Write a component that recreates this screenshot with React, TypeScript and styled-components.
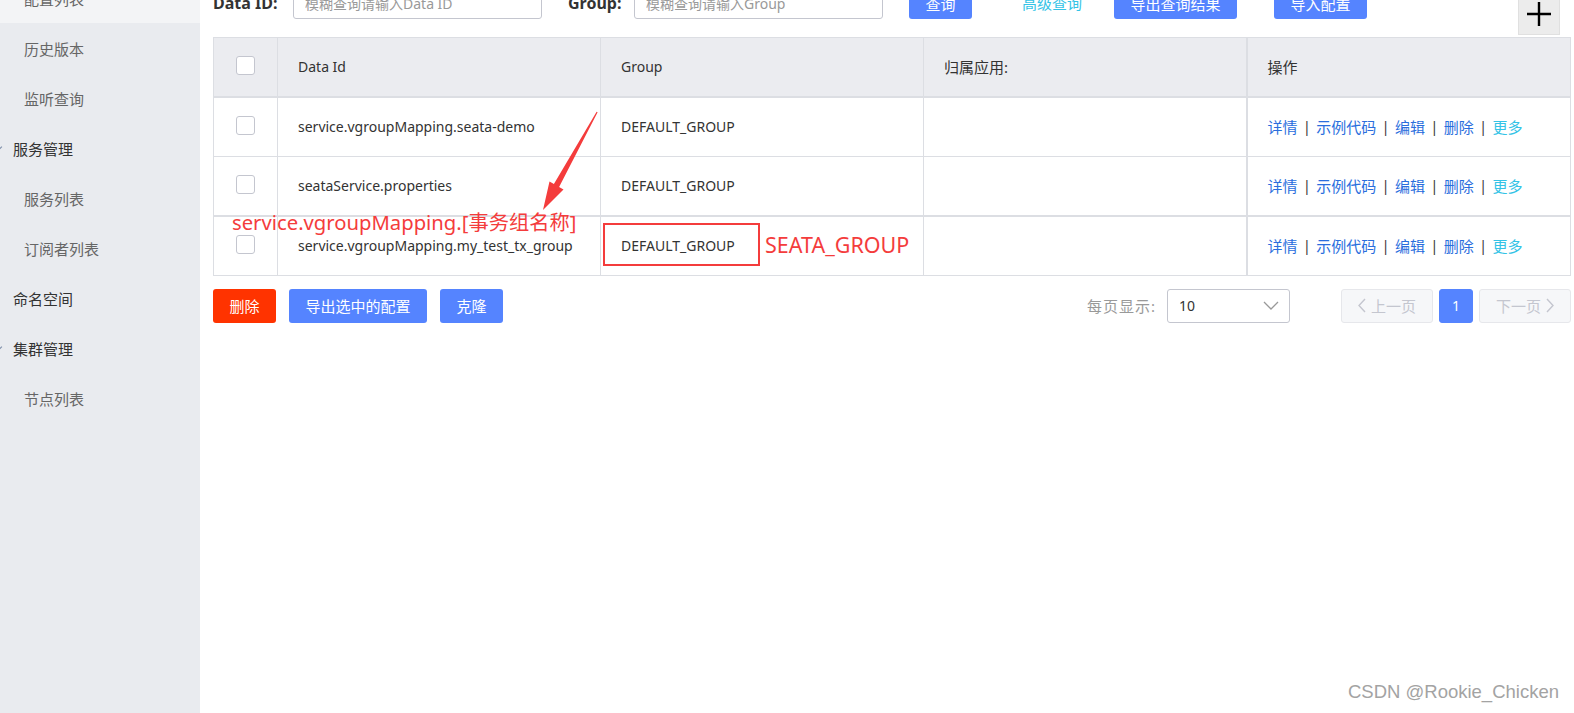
import React from "react";
import styled, { createGlobalStyle } from "styled-components";

const GlobalStyle = createGlobalStyle`
  html, body {
    margin: 0;
    padding: 0;
    background: #fff;
  }
  body {
    font-family: "Noto Sans", "Noto Sans CJK SC", sans-serif;
    font-size: 14px;
    color: #333;
    overflow: hidden;
  }
  * {
    box-sizing: border-box;
  }
`;

const colors = {
  border: "#dcdee3",
  headerBg: "#ebecf0",
  sidebarBg: "#e9ebef",
  sidebarActive: "#f3f4f6",
  primary: "#5584ff",
  danger: "#ff3300",
  link: "#2a6edd",
  linkCyan: "#34c3e6",
  muted: "#999",
  disabled: "#c4c6cf",
  mark: "#f43c3c",
};

const Page = styled.div`
  position: relative;
  display: flex;
  width: 100vw;
  min-width: 1574px;
  height: 713px;
  overflow: hidden;
`;

/* ---------- sidebar ---------- */

const Sidebar = styled.aside`
  flex: 0 0 200px;
  background: ${colors.sidebarBg};
  overflow: hidden;
`;

const NavList = styled.ul`
  list-style: none;
  margin: -27px 0 0;
  padding: 0;
`;

const NavItem = styled.li<{ $sub?: boolean; $active?: boolean; $caret?: boolean }>`
  position: relative;
  height: 50px;
  display: flex;
  align-items: center;
  padding-left: ${(p) => (p.$sub ? 24 : 13)}px;
  color: ${(p) => (p.$sub ? "#666" : "#333")};
  background: ${(p) => (p.$active ? colors.sidebarActive : "transparent")};
  font-size: 15px;

  &::before {
    content: "";
    display: ${(p) => (p.$caret ? "block" : "none")};
    position: absolute;
    left: -5px;
    top: 21px;
    width: 5px;
    height: 5px;
    border-right: 1px solid #7a8ba6;
    border-bottom: 1px solid #7a8ba6;
    transform: rotate(45deg);
  }
`;

/* ---------- main ---------- */

const Main = styled.main`
  flex: 1;
  min-width: 0;
  display: flex;
  flex-direction: column;
  padding: 0 3px 0 13px;
`;

const SearchBar = styled.div`
  display: flex;
  align-items: flex-start;
  height: 50px;
  margin-top: -13px;
`;

const Label = styled.label<{ $w: number; $ml?: number }>`
  flex: none;
  width: ${(p) => p.$w}px;
  margin-left: ${(p) => p.$ml ?? 0}px;
  height: 32px;
  line-height: 32px;
  font-size: 16px;
  font-weight: 700;
  color: #333;
`;

const TextInput = styled.input`
  flex: none;
  width: 249px;
  height: 32px;
  border: 1px solid ${colors.disabled};
  border-radius: 3px;
  padding: 0 11px;
  font-family: inherit;
  font-size: 14px;
  color: #333;
  outline: none;

  &::placeholder {
    color: ${colors.muted};
  }
`;

const Btn = styled.button<{ $variant?: "primary" | "danger"; $ml?: number; $h?: number }>`
  flex: none;
  height: ${(p) => p.$h ?? 32}px;
  margin-left: ${(p) => p.$ml ?? 0}px;
  padding: 0 16.5px;
  border: none;
  border-radius: 3px;
  background: ${(p) => (p.$variant === "danger" ? colors.danger : colors.primary)};
  color: #fff;
  font-family: inherit;
  font-size: 15px;
  white-space: nowrap;
  cursor: pointer;
`;

const TextLink = styled.a<{ $ml?: number }>`
  flex: none;
  height: 32px;
  line-height: 32px;
  margin-left: ${(p) => p.$ml ?? 0}px;
  color: ${colors.linkCyan};
  font-size: 15px;
  text-decoration: none;
`;

const AddButton = styled.button`
  flex: none;
  width: 42px;
  height: 42px;
  margin: 6px 11px 0 auto;
  display: flex;
  align-items: center;
  justify-content: center;
  background: #ececec;
  border: 1px solid #e0e0e0;
  padding: 0;
`;

/* ---------- table ---------- */

const Table = styled.table`
  width: 100%;
  border-collapse: collapse;
  table-layout: fixed;
  border: 1px solid ${colors.border};
`;

const Th = styled.th<{ $thick?: boolean; $cjk?: boolean }>`
  height: 59px;
  padding: 0 20px;
  text-align: left;
  font-weight: 400;
  font-size: ${(p) => (p.$cjk ? 15 : 14)}px;
  color: #333;
  background: ${colors.headerBg};
  border-bottom: 2px solid ${colors.border};
  border-left: ${(p) => (p.$thick ? 2 : 1)}px solid ${colors.border};
`;

const Tr = styled.tr<{ $thickTop?: boolean }>`
  td {
    border-top: ${(p) => (p.$thickTop ? 2 : 1)}px solid ${colors.border};
  }
`;

const Td = styled.td<{ $thick?: boolean }>`
  height: 59.5px;
  padding: 0 20px;
  font-size: 14px;
  color: #333;
  white-space: nowrap;
  border-left: ${(p) => (p.$thick ? 2 : 1)}px solid ${colors.border};
`;

const CheckCell = styled.div`
  display: flex;
  justify-content: center;
  margin-top: -2px;
`;

const Checkbox = styled.span`
  display: block;
  width: 19px;
  height: 19px;
  border: 1px solid ${colors.disabled};
  border-radius: 3px;
  background: #fff;
`;

const Actions = styled.div`
  display: flex;
  align-items: center;
  font-size: 15px;
`;

const ActionLink = styled.a<{ $cyan?: boolean }>`
  color: ${(p) => (p.$cyan ? colors.linkCyan : colors.link)};
  text-decoration: none;
`;

const Sep = styled.span`
  margin: 0 5.5px;
  color: #333;
  font-size: 14px;
`;

/* ---------- footer ---------- */

const Footer = styled.div`
  display: flex;
  align-items: center;
  margin-top: 13px;
  height: 34px;
`;

const PageSizeLabel = styled.span`
  margin-left: auto;
  color: ${colors.muted};
  font-size: 15px;
  letter-spacing: 1px;
`;

const Select = styled.div`
  width: 123px;
  height: 34px;
  margin-left: 11px;
  display: flex;
  align-items: center;
  justify-content: space-between;
  padding: 0 10px 0 11px;
  border: 1px solid ${colors.disabled};
  border-radius: 3px;
  color: #333;
  font-size: 14px;
`;

const Pager = styled.div`
  display: flex;
  gap: 6px;
  margin-left: 51px;
`;

const PageBtn = styled.button<{ $current?: boolean }>`
  height: 34px;
  min-width: ${(p) => (p.$current ? 34 : 92)}px;
  display: flex;
  align-items: center;
  justify-content: center;
  gap: 5px;
  padding: 0;
  border: 1px solid ${(p) => (p.$current ? colors.primary : "#e6e7eb")};
  border-radius: 3px;
  background: ${(p) => (p.$current ? colors.primary : "#f6f7f9")};
  color: ${(p) => (p.$current ? "#fff" : colors.disabled)};
  font-family: inherit;
  font-size: ${(p) => (p.$current ? 14 : 15)}px;
`;

/* ---------- overlays ---------- */

const MarkText = styled.div<{ $x: number; $y: number; $size: number }>`
  position: absolute;
  left: ${(p) => p.$x}px;
  top: ${(p) => p.$y}px;
  color: ${colors.mark};
  font-size: ${(p) => p.$size}px;
  line-height: 1;
  white-space: nowrap;
`;

const MarkBox = styled.div`
  position: absolute;
  left: 603px;
  top: 223px;
  width: 157px;
  height: 43px;
  border: 2px solid ${colors.mark};
`;

const ArrowLayer = styled.svg`
  position: absolute;
  left: 0;
  top: 0;
  pointer-events: none;
`;

const Watermark = styled.div`
  position: absolute;
  right: 15px;
  bottom: 10px;
  font-family: "Liberation Sans", Arial, sans-serif;
  font-size: 18.5px;
  color: #a3a3a3;
`;

const rows = [
  { id: "service.vgroupMapping.seata-demo", group: "DEFAULT_GROUP" },
  { id: "seataService.properties", group: "DEFAULT_GROUP" },
  { id: "service.vgroupMapping.my_test_tx_group", group: "DEFAULT_GROUP" },
];

const Chevron = ({ dir }: { dir: "left" | "right" | "down" }) => {
  if (dir === "down") {
    return (
      <svg width="16" height="9" viewBox="0 0 16 9">
        <polyline points="1,1 8,8 15,1" fill="none" stroke="#999" strokeWidth="1.3" />
      </svg>
    );
  }
  return (
    <svg width="8" height="15" viewBox="0 0 8 15">
      <polyline
        points={dir === "left" ? "7,1 1,7.5 7,14" : "1,1 7,7.5 1,14"}
        fill="none"
        stroke={colors.disabled}
        strokeWidth="1.4"
      />
    </svg>
  );
};

export default function App() {
  return (
    <Page>
      <GlobalStyle />
      <Sidebar>
        <NavList>
          <NavItem $sub $active>配置列表</NavItem>
          <NavItem $sub>历史版本</NavItem>
          <NavItem $sub>监听查询</NavItem>
          <NavItem $caret>服务管理</NavItem>
          <NavItem $sub>服务列表</NavItem>
          <NavItem $sub>订阅者列表</NavItem>
          <NavItem>命名空间</NavItem>
          <NavItem $caret>集群管理</NavItem>
          <NavItem $sub>节点列表</NavItem>
        </NavList>
      </Sidebar>

      <Main>
        <SearchBar>
          <Label $w={80}>Data ID:</Label>
          <TextInput placeholder="模糊查询请输入Data ID" />
          <Label $w={66} $ml={26}>Group:</Label>
          <TextInput placeholder="模糊查询请输入Group" />
          <Btn $ml={26}>查询</Btn>
          <TextLink $ml={50}>高级查询</TextLink>
          <Btn $ml={32}>导出查询结果</Btn>
          <Btn $ml={37}>导入配置</Btn>
          <AddButton aria-label="add">
            <svg width="26" height="26" viewBox="0 0 26 26">
              <path d="M13 1v24M1 13h24" stroke="#000" strokeWidth="2.4" />
            </svg>
          </AddButton>
        </SearchBar>

        <Table>
          <colgroup>
            <col style={{ width: 64 }} />
            <col style={{ width: 323 }} />
            <col style={{ width: 323 }} />
            <col style={{ width: 323 }} />
            <col />
          </colgroup>
          <thead>
            <tr>
              <Th style={{ borderLeft: "none" }}>
                <CheckCell>
                  <Checkbox />
                </CheckCell>
              </Th>
              <Th>Data Id</Th>
              <Th>Group</Th>
              <Th $cjk>归属应用:</Th>
              <Th $thick $cjk>操作</Th>
            </tr>
          </thead>
          <tbody>
            {rows.map((r, i) => (
              <Tr key={r.id} $thickTop={i === 2}>
                <Td style={{ borderLeft: "none" }}>
                  <CheckCell>
                    <Checkbox />
                  </CheckCell>
                </Td>
                <Td>{r.id}</Td>
                <Td>{r.group}</Td>
                <Td />
                <Td $thick>
                  <Actions>
                    <ActionLink>详情</ActionLink>
                    <Sep>|</Sep>
                    <ActionLink>示例代码</ActionLink>
                    <Sep>|</Sep>
                    <ActionLink>编辑</ActionLink>
                    <Sep>|</Sep>
                    <ActionLink>删除</ActionLink>
                    <Sep>|</Sep>
                    <ActionLink $cyan>更多</ActionLink>
                  </Actions>
                </Td>
              </Tr>
            ))}
          </tbody>
        </Table>

        <Footer>
          <Btn $variant="danger" $h={34}>删除</Btn>
          <Btn $ml={13} $h={34}>导出选中的配置</Btn>
          <Btn $ml={13} $h={34}>克隆</Btn>
          <PageSizeLabel>每页显示:</PageSizeLabel>
          <Select>
            <span>10</span>
            <Chevron dir="down" />
          </Select>
          <Pager>
            <PageBtn disabled>
              <Chevron dir="left" />
              上一页
            </PageBtn>
            <PageBtn $current>1</PageBtn>
            <PageBtn disabled>
              下一页
              <Chevron dir="right" />
            </PageBtn>
          </Pager>
        </Footer>
      </Main>

      {/* red hand-drawn annotations over the screenshot */}
      <ArrowLayer width="1574" height="713" viewBox="0 0 1574 713">
        <polygon
          points="597.6,112.3 559.1,187 563.5,189.4 543,210 549.5,181.6 553.9,184.1 596.6,111.7"
          fill={colors.mark}
        />
      </ArrowLayer>
      <MarkText $x={232} $y={212} $size={20.25}>service.vgroupMapping.[事务组名称]</MarkText>
      <MarkBox />
      <MarkText $x={765} $y={234} $size={21.5}>SEATA_GROUP</MarkText>
      <Watermark>CSDN @Rookie_Chicken</Watermark>
    </Page>
  );
}
